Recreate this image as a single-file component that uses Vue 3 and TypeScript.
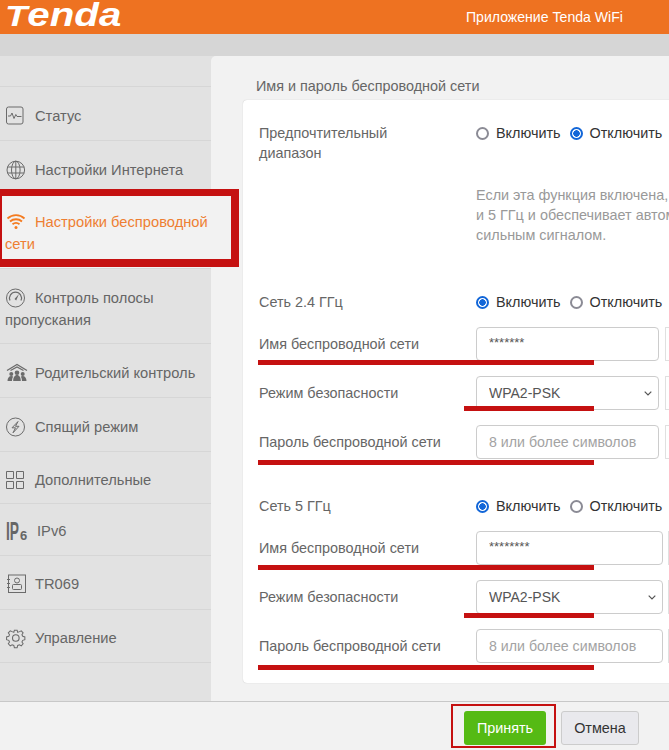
<template>
  <div class="page">
    <header class="top">
      <span class="logo"><span class="logo-t">T</span>enda</span>
      <span class="app-link">Приложение Tenda WiFi</span>
    </header>
    <div class="band"></div>

    <div class="body">
      <aside class="side">
        <div class="side-head"></div>
        <a
          v-for="item in navItems"
          :key="item.key"
          class="nav-item"
          :class="{ active: item.key === 'wifi', wide: item.key === 'ipv6' }"
          :style="{ height: item.h + 'px', paddingTop: item.pad + 'px' }"
        >
          <svg class="nav-icon" viewBox="0 0 20 20" aria-hidden="true">
            <template v-if="item.key === 'status'">
              <rect x="1.500" y="1" width="16.500" height="17" rx="2" fill="none" stroke="currentColor" />
              <path d="M3 10h2.500l1.500-3 2 5.500 1.800-4 1.200 2h4.500" fill="none" stroke="currentColor" />
            </template>
            <template v-else-if="item.key === 'net'">
              <circle cx="10.800" cy="10" r="8.800" fill="none" stroke="currentColor" />
              <ellipse cx="10.800" cy="10" rx="4.300" ry="8.800" fill="none" stroke="currentColor" />
              <path d="M10.800 1.200v17.600M2.500 7h16.600M2.500 13h16.600" fill="none" stroke="currentColor" />
            </template>
            <template v-else-if="item.key === 'wifi'">
              <path d="M2.500 6.500c4.800-4.400 12.200-4.400 17 0M5 9.500c3.400-3 8.600-3 12 0M7.500 12.300c2-1.700 5-1.700 7 0" fill="none" stroke="#f47b20" stroke-width="1.800" />
              <circle cx="11" cy="15.500" r="1.500" fill="#f47b20" />
            </template>
            <template v-else-if="item.key === 'qos'">
              <circle cx="10.500" cy="10" r="9" fill="none" stroke="currentColor" />
              <path d="M5 12.500a6 6 0 1 1 11 0" fill="none" stroke="currentColor" stroke-width="1.200" />
              <path d="M9.500 11l4.500-5-2.800 6.500z" fill="currentColor" />
            </template>
            <template v-else-if="item.key === 'parent'">
              <path d="M2 7.500L12 1.500 22 7.500M5.500 7.500L12 4l6.500 3.500" fill="none" stroke="currentColor" stroke-width="1.300" />
              <circle cx="12" cy="9.800" r="2.300" fill="currentColor" />
              <circle cx="6.300" cy="11" r="2" fill="currentColor" />
              <circle cx="17.700" cy="11" r="2" fill="currentColor" />
              <path d="M2.500 18c0-3 1.500-5 3.800-5 .8 0 1.400.2 1.800.6C7.300 15 7 16.500 7 18zM17 18c0-1.500-.3-3-1.100-4.400.4-.4 1-.6 1.800-.6 2.300 0 3.800 2 3.800 5zM8.200 18c0-3.300 1.500-5.900 3.800-5.900s3.800 2.600 3.800 5.900z" fill="currentColor" />
            </template>
            <template v-else-if="item.key === 'sleep'">
              <circle cx="10.500" cy="10" r="9" fill="none" stroke="currentColor" />
              <path d="M13 4.500L7 10.800h3.500l-2.500 5 6-6.500h-3.500z" fill="none" stroke="currentColor" />
            </template>
            <template v-else-if="item.key === 'more'">
              <path d="M1.500 1.500h7v7h-7zM11.500 1.500h7v7h-7zM1.500 11.500h7v7h-7zM11.500 11.500h7v7h-7z" fill="none" stroke="currentColor" />
            </template>
            <template v-else-if="item.key === 'ipv6'">
              <text x="1" y="19" class="ip-mark" textLength="13" lengthAdjust="spacingAndGlyphs">IP</text>
              <text x="15" y="19" class="ip-six">6</text>
            </template>
            <template v-else-if="item.key === 'tr'">
              <rect x="3.500" y="1" width="17" height="17.500" fill="none" stroke="currentColor" />
              <path d="M2 5.500h3M2 9.500h3M2 13.500h3" stroke="currentColor" />
              <circle cx="12" cy="6.500" r="2.500" fill="none" stroke="currentColor" />
              <rect x="7.500" y="10.500" width="9" height="5" rx="1" fill="none" stroke="currentColor" />
            </template>
            <template v-else>
              <path
                d="M9 1.500h3l.6 2.400 2-.8 1.900-.9 2 2.200-1.300 2 .9 1.800 2.300.6v3l-2.300.7-.9 1.800 1.300 2-2 2.200-2-1.200-1.900.8-.6 2.400H9l-.6-2.400-1.900-.8-2 1.200-2.100-2.200 1.300-2-.8-1.800-2.400-.7v-3l2.400-.6.8-1.800-1.300-2 2.100-2.200 2 .9 1.900.8z"
                fill="none"
                stroke="currentColor"
                stroke-width="1.100"
                transform="translate(1.100 .8) scale(.92)"
              />
              <circle cx="10.800" cy="10" r="3.300" fill="none" stroke="currentColor" stroke-width="1.100" />
            </template>
          </svg>
          <span class="nav-text">{{ item.label }}</span>
        </a>
      </aside>

      <main class="content">
        <h2 class="section-title">Имя и пароль беспроводной сети</h2>
        <div class="card">
          <div class="row row-top">
            <div class="label">Предпочтительный<br />диапазон</div>
            <div class="radios">
              <label><input type="radio" name="pref" />Включить</label>
              <label><input type="radio" name="pref" checked />Отключить</label>
            </div>
          </div>
          <div class="hint">
            <div>Если эта функция включена, маршрутизатор объединяет сети 2.4 ГГц</div>
            <div>и 5 ГГц и обеспечивает автоматическое подключение устройств с</div>
            <div>сильным сигналом.</div>
          </div>

          <section v-for="band in bands" :key="band.name" class="band-block" :class="band.cls">
            <div class="row">
              <div class="label">{{ band.name }}</div>
              <div class="radios">
                <label><input type="radio" :name="band.cls" checked />Включить</label>
                <label><input type="radio" :name="band.cls" />Отключить</label>
              </div>
            </div>
            <div class="row field">
              <div class="label">Имя беспроводной сети</div>
              <input class="ctl ctl-name" type="text" :value="band.ssid" />
              <span class="stub"></span>
            </div>
            <div class="row field">
              <div class="label">Режим безопасности</div>
              <select class="ctl ctl-select">
                <option>WPA2-PSK</option>
              </select>
              <span class="stub"></span>
            </div>
            <div class="row field">
              <div class="label">Пароль беспроводной сети</div>
              <input class="ctl" type="text" placeholder="8 или более символов" />
              <span class="stub"></span>
            </div>
          </section>
        </div>
      </main>
    </div>

    <footer class="foot">
      <button class="btn btn-ok">Принять</button>
      <button class="btn btn-cancel">Отмена</button>
    </footer>

    <!-- red marks drawn over the screenshot -->
    <div class="mark-nav"></div>
    <div class="mark-ok"></div>
    <div
      v-for="line in underlines"
      :key="line.top"
      class="mark-line"
      :style="{ top: line.top + 'px', left: line.left + 'px', width: 594 - line.left + 'px' }"
    ></div>
  </div>
</template>

<script setup lang="ts">
// row heights are uneven on the real page, so they are kept per item
const navItems = [
  { key: 'status', label: 'Статус', h: 54, pad: 18 },
  { key: 'net', label: 'Настройки Интернета', h: 53, pad: 18 },
  { key: 'wifi', label: 'Настройки беспроводной сети', h: 75, pad: 17 },
  { key: 'qos', label: 'Контроль полосы пропускания', h: 75, pad: 18 },
  { key: 'parent', label: 'Родительский контроль', h: 54, pad: 18 },
  { key: 'sleep', label: 'Спящий режим', h: 54, pad: 18 },
  { key: 'more', label: 'Дополнительные', h: 52, pad: 17 },
  { key: 'ipv6', label: 'IPv6', h: 52, pad: 16 },
  { key: 'tr', label: 'TR069', h: 54, pad: 17 },
  { key: 'manage', label: 'Управление', h: 53, pad: 17 },
]

const bands = [
  { name: 'Сеть 2.4 ГГц', cls: 'b24', ssid: '*******' },
  { name: 'Сеть 5 ГГц', cls: 'b5', ssid: '********' },
]

const underlines = [
  { top: 360, left: 258 },
  { top: 406, left: 464 },
  { top: 460, left: 258 },
  { top: 565, left: 258 },
  { top: 613, left: 464 },
  { top: 665, left: 258 },
]
</script>

<style>
html,
body {
  margin: 0;
  overflow: hidden;
}
</style>

<style scoped>
.page {
  position: relative;
  width: 669px;
  height: 750px;
  display: flex;
  flex-direction: column;
  overflow: hidden;
  background: #f2f2f2;
  font-family: 'Liberation Sans', Arial, sans-serif;
  font-size: 14.4px;
  color: #666;
}

.top {
  height: 34px;
  flex: none;
  display: flex;
  align-items: center;
  justify-content: space-between;
  background: #ee7221;
  color: #fff;
  overflow: hidden;
}
.logo {
  margin-left: 5px;
  font-size: 33px;
  line-height: 34px;
  font-weight: 700;
  font-style: italic;
  transform: translateY(-2px) scaleX(1.22);
  transform-origin: left center;
}
.logo-t {
  font-size: 30px;
}
.app-link {
  margin-right: 46px;
  font-size: 14.1px;
}

.band {
  height: 22px;
  flex: none;
  background: #d6d6d6;
}

.body {
  flex: 1;
  min-height: 0;
  display: flex;
  background: #e2e2e2;
}

.side {
  width: 211px;
  flex: none;
}
.side-head {
  height: 30px;
  border-bottom: 1px solid #d6d6d6;
}
.nav-item {
  display: block;
  box-sizing: border-box;
  padding-left: 5px;
  border-bottom: 1px solid #d6d6d6;
  font-size: 14.7px;
  line-height: 22px;
  color: #666;
}
.nav-item.active {
  background: #f2f2f2;
  color: #ee7f33;
}
.nav-icon {
  width: 20px;
  height: 20px;
  margin: -3px 10px 0 0;
  vertical-align: middle;
  color: #6b6b6b;
  overflow: visible;
}
.nav-item.wide .nav-icon {
  margin-right: 12px;
}
.ip-mark {
  font: 700 25px 'Liberation Sans', sans-serif;
  fill: #666;
}
.ip-six {
  font: 700 13px 'Liberation Sans', sans-serif;
  fill: #666;
}

.content {
  flex: 1;
  min-width: 0;
  background: #f2f2f2;
  border-top-left-radius: 5px;
  padding: 21px 0 0 32px;
}
.section-title {
  margin: 0 0 5px;
  padding-left: 13px;
  font-size: 14.4px;
  font-weight: 400;
  line-height: 18px;
  color: #666;
}

.card {
  width: 460px;
  box-sizing: border-box;
  padding: 23px 0 20px 16px;
  background: #fff;
  border-radius: 4px;
  box-shadow: 0 0 1px rgba(0, 0, 0, 0.25);
}

.row {
  display: flex;
  align-items: center;
}
.row-top {
  align-items: flex-start;
}
.label {
  width: 217px;
  flex: none;
  line-height: 20px;
  color: #666;
}
.radios {
  display: flex;
  gap: 9px;
  line-height: 20px;
  color: #333;
}
.radios label {
  display: flex;
  align-items: center;
}
.radios input {
  appearance: none;
  width: 13px;
  height: 13px;
  box-sizing: border-box;
  margin: 0 7px 0 0;
  border: 2px solid #8b8b95;
  border-radius: 50%;
  background: #fff;
}
.radios input:checked {
  border-color: #1266d8;
  background: radial-gradient(circle, #1266d8 0 3px, #fff 3.500px);
}

.hint {
  margin: 22px 0 0 217px;
  line-height: 20px;
  color: #999;
  white-space: nowrap;
}

.band-block {
  margin-top: 47px;
}
.band-block.b5 {
  margin-top: 37px;
}
.field {
  margin-top: 15px;
}
.ctl {
  width: 183px;
  height: 34px;
  flex: none;
  box-sizing: border-box;
  padding: 0 12px;
  border: 1px solid #ccc;
  border-radius: 4px;
  background: #fff;
  font-family: inherit;
  font-size: 14.2px;
  color: #555;
  outline: none;
}
.ctl-select {
  appearance: none;
  font-size: 14px;
  background: #fff url("data:image/svg+xml,%3Csvg xmlns='http://www.w3.org/2000/svg' width='8' height='5'%3E%3Cpath d='M.7.7L4 4l3.300-3.300' fill='none' stroke='%23555' stroke-width='1.200'/%3E%3C/svg%3E") no-repeat right 6px center;
}
.ctl::placeholder {
  color: #a3a3a3;
}
.ctl-name {
  padding-bottom: 4px;
  font-size: 13px;
}
.b5 .ctl {
  width: 187px;
}
.stub {
  width: 20px;
  height: 34px;
  flex: none;
  box-sizing: border-box;
  margin-left: 6px;
  border: 1px solid #e0e0e0;
}
.b5 .stub {
  margin-left: 5px;
}

.foot {
  height: 49px;
  flex: none;
  box-sizing: border-box;
  display: flex;
  justify-content: flex-end;
  align-items: flex-start;
  gap: 15px;
  padding: 9px 30px 0 0;
  background: #f2f2f2;
  border-top: 1px solid #c8c8c8;
}
.btn {
  height: 34px;
  box-sizing: border-box;
  border-radius: 3px;
  font-family: inherit;
  font-size: 14.4px;
  cursor: pointer;
}
.btn-ok {
  width: 82px;
  border: 0;
  background: #55ba14;
  color: #fff;
}
.btn-cancel {
  width: 78px;
  border: 1px solid #ccc;
  background: #e9e9ed;
  color: #333;
}

.mark-nav {
  position: absolute;
  left: 0;
  top: 189px;
  width: 239px;
  height: 78px;
  box-sizing: border-box;
  border: solid #c51111;
  border-width: 7px 8px 8px 2px;
}
.mark-ok {
  position: absolute;
  left: 451px;
  top: 704px;
  width: 105px;
  height: 44px;
  box-sizing: border-box;
  border: 2px solid #c51111;
}
.mark-line {
  position: absolute;
  height: 5px;
  background: #c51111;
}
</style>
